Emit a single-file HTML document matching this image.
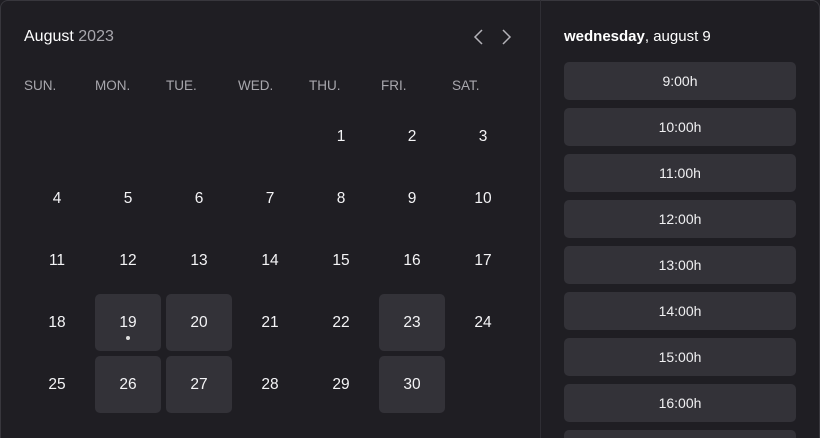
<!DOCTYPE html>
<html style="width:820px;height:438px;overflow:hidden"><head><style>
*{margin:0;padding:0;box-sizing:border-box}
body{width:820px;height:438px;background:#1f1e23;font-family:"Liberation Sans",sans-serif;overflow:hidden;position:relative}
.wrap{position:absolute;left:0;top:0;width:820px;height:438px;overflow:hidden}
.frame{position:absolute;left:0;top:0;width:820px;height:446px;border:1px solid #38373d;border-radius:8px;background:#1f1e23}
.div{position:absolute;left:540px;top:0;width:1px;height:438px;background:#2f2e34}
.t{position:absolute;color:#fff}
.dow{position:absolute;top:78px;font-size:13.5px;color:#a8a7ad;width:71px}
.c{position:absolute;width:66px;height:57px;border-radius:5px;color:#f4f4f6;font-size:15.5px;text-align:center;line-height:57px}
.c.s{background:#333238}
.dot{position:absolute;left:31px;top:42px;width:4px;height:4px;border-radius:2px;background:#ddd}
.slot{position:absolute;left:564px;width:232px;height:38px;border-radius:5px;background:#333238;color:#f0f0f2;font-size:14px;text-align:center;line-height:38px}
</style></head><body><div class="wrap">
<div class="frame"></div>
<div class="div"></div>
<div class="t" style="left:24px;top:28px;font-size:16px;font-weight:500">August <span style="color:#a8a7ad">2023</span></div>
<svg style="position:absolute;left:470px;top:28px" width="50" height="18" viewBox="0 0 50 18" fill="none" stroke="#b4b3b9" stroke-width="1.5"><path d="M12 2 L5 9 L12 16"/><path d="M33 2 L40 9 L33 16"/></svg>
<div class="dow" style="left:24px">SUN.</div>
<div class="dow" style="left:95px">MON.</div>
<div class="dow" style="left:166px">TUE.</div>
<div class="dow" style="left:238px">WED.</div>
<div class="dow" style="left:309px">THU.</div>
<div class="dow" style="left:381px">FRI.</div>
<div class="dow" style="left:452px">SAT.</div>
<div id="g"></div>
<div class="t" style="left:564px;top:28px;font-size:15px"><b>wednesday</b>, august 9</div>
<div class="slot" style="top:62px">9:00h</div>
<div class="slot" style="top:108px">10:00h</div>
<div class="slot" style="top:154px">11:00h</div>
<div class="slot" style="top:200px">12:00h</div>
<div class="slot" style="top:246px">13:00h</div>
<div class="slot" style="top:292px">14:00h</div>
<div class="slot" style="top:338px">15:00h</div>
<div class="slot" style="top:384px">16:00h</div>
<div class="slot" style="top:430px">17:00h</div>
</div>
<script>
var g=document.getElementById('g'),h='';
var sel={19:1,20:1,23:1,26:1,27:1,30:1};
for(var d=1;d<=30;d++){var i=d+3,col=i%7,row=Math.floor(i/7);
var x=24+col*71,y=108+row*62;
h+='<div class="c'+(sel[d]?' s':'')+'" style="left:'+x+'px;top:'+y+'px">'+d+(d==19?'<div class="dot"></div>':'')+'</div>';}
g.innerHTML=h;
</script>
</body></html>
